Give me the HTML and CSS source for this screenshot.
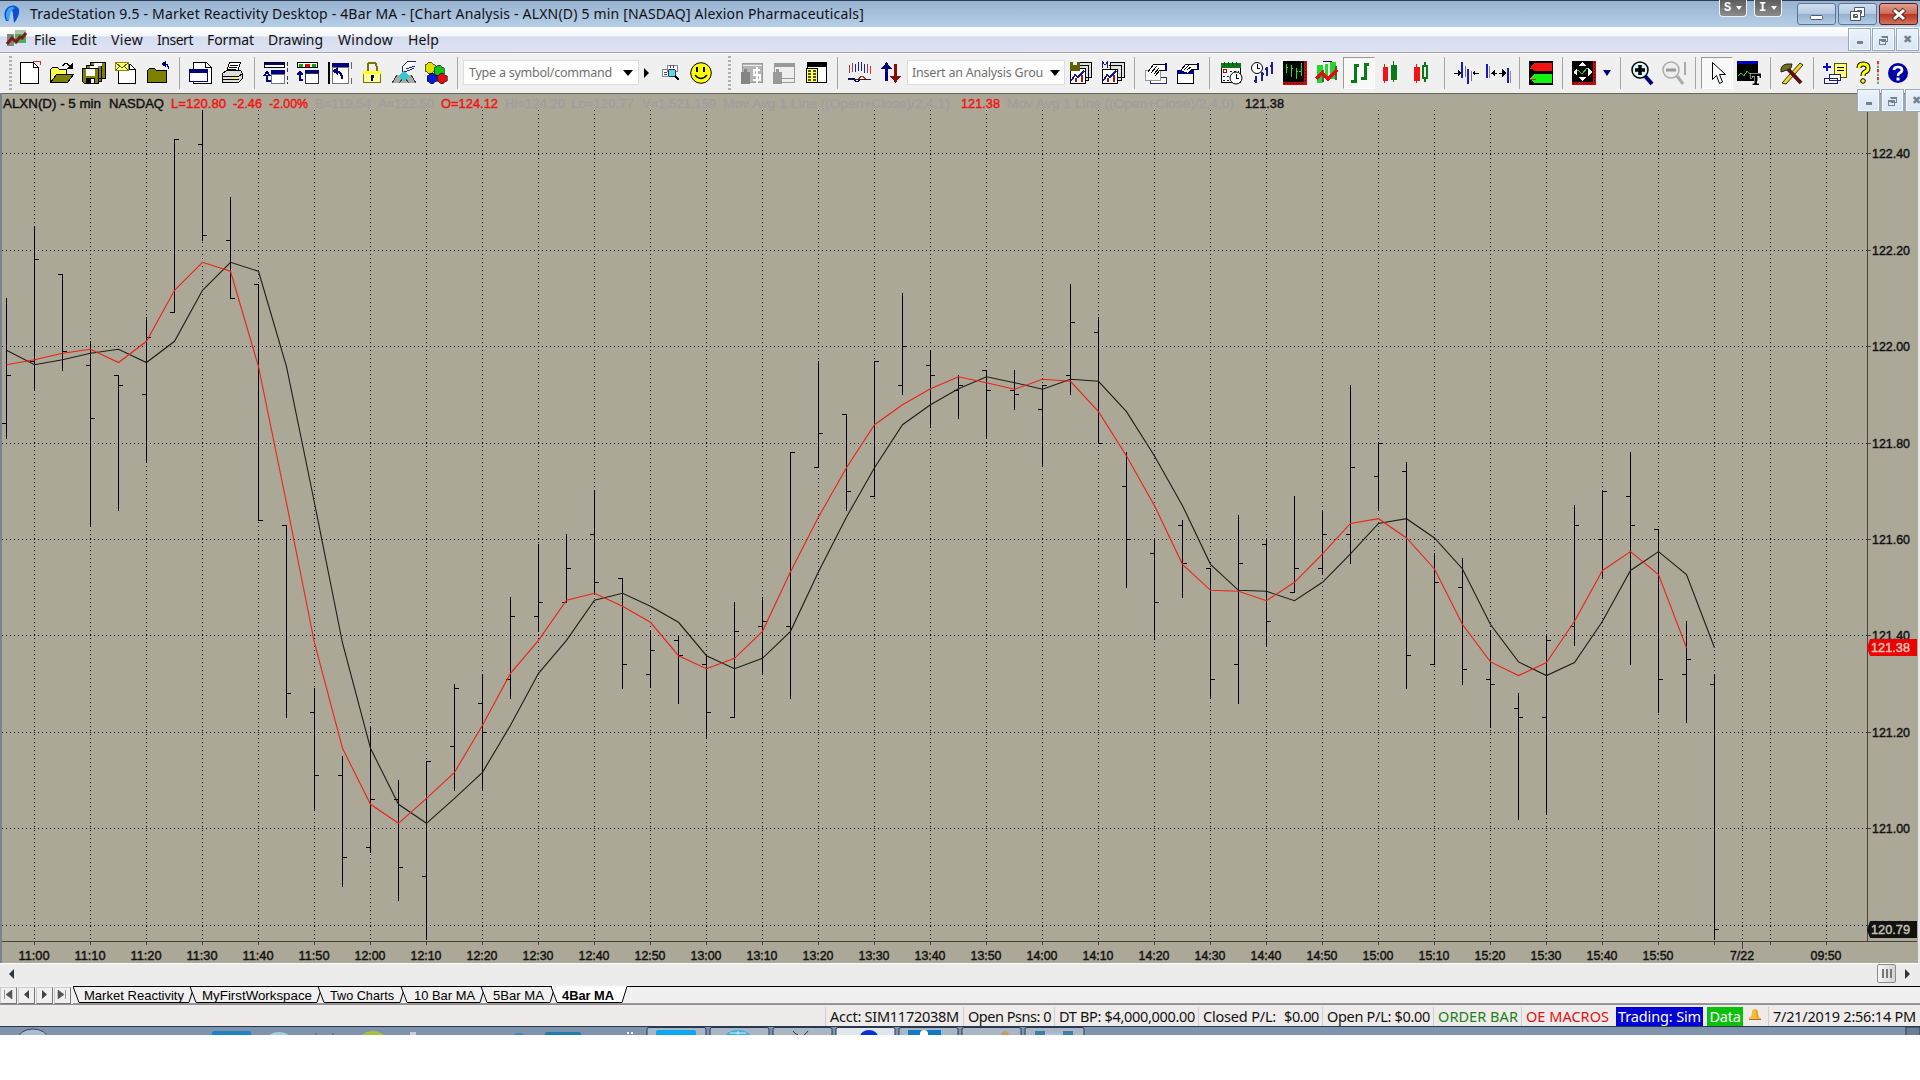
FILE: index.html
```html
<!DOCTYPE html>
<html lang="en">
<head>
  <meta charset="UTF-8">
  <title>TradeStation 9.5 - Market Reactivity Desktop</title>
  <link rel="stylesheet" href="styles.css">
</head>
<body>

  <header class="titlebar">
    <svg class="app-icon" width="20" height="22" viewBox="0 0 20 22"><path d="M4 18Q0 9 6 4Q13 0 17 6Q18 13 12 20L11 12Q11 7 9 7Q6 9 7 18Z" fill="#0b4fd0"/><path d="M5 17Q2 9 7 5Q10 3 13 5Q8 6 7 18Z" fill="#3ba4f5"/></svg>
    <span class="title" data-w="834">TradeStation 9.5 - Market Reactivity Desktop - 4Bar MA - [Chart Analysis - ALXN(D) 5 min [NASDAQ] Alexion Pharmaceuticals]</span>
    <div class="float-tags">
      <span class="float-tag">S<i></i></span>
      <span class="float-tag">I<i></i></span>
    </div>
    <div class="win-buttons">
      <span class="win-btn"><svg width="38" height="21"><rect x="12.5" y="11.500" width="12" height="4" rx="1" fill="#fff" stroke="#4c5a6e"/></svg></span>
      <span class="win-btn"><svg width="38" height="21"><g fill="#fff" stroke="#4c5a6e"><path d="M15.500 3.500h10v9h-10z M18.500 6.500h4v3h-4z" fill-rule="evenodd"/><path d="M11.500 7.500h10v9h-10z M14.500 10.500h4v3h-4z" fill-rule="evenodd"/></g></svg></span>
      <span class="win-btn close"><svg width="38" height="21"><path d="M13.500 5.500L24.500 15.500M24.500 5.500L13.500 15.500" stroke="#5b2a2a" stroke-width="5"/><path d="M14 6L24 15M24 6L14 15" stroke="#fff" stroke-width="3"/></svg></span>
    </div>
  </header>

  <nav class="menubar">
    <svg class="menu-icon" width="21" height="18" viewBox="0 0 21 18"><rect x="1" y="5" width="7" height="12" fill="#7a8c7c"/><rect x="9" y="1" width="11" height="13" fill="#4fae5c"/><rect x="9" y="1" width="11" height="4" fill="#a9c8ac"/><path d="M1 15L6 9L10 13L14 8L16 9L20 4" fill="none" stroke="#7c1b1b" stroke-width="3"/></svg>
    <span class="m1" data-w="22">File</span>
    <span class="m2" data-w="26">Edit</span>
    <span class="m3" data-w="32">View</span>
    <span class="m4" data-w="36">Insert</span>
    <span class="m5" data-w="47">Format</span>
    <span class="m6" data-w="55">Drawing</span>
    <span class="m7" data-w="55">Window</span>
    <span class="m8" data-w="31">Help</span>
    <div class="mdi-buttons">
      <span class="mdi-btn"><i class="g-min"></i></span>
      <span class="mdi-btn"><i class="g-restore"></i></span>
      <span class="mdi-btn"><i class="g-x">&#x2716;</i></span>
    </div>
  </nav>

  <div class="toolbar">
    <i class="grip first"></i>
    <span class="tool"><svg viewBox="0 0 24 24"><path d="M2.500 1.500h13l5 5v16h-18z" fill="#fff" stroke="#000"/><path d="M15.500 1.500v5h5" fill="none" stroke="#000"/><path d="M15 .5h7v3" fill="none" stroke="#c33"/></svg></span>
    <span class="tool"><svg viewBox="0 0 24 24"><path d="M.5 21.500v-13l2-2h5l2 2h7v5" fill="#ffff4a" stroke="#000"/><path d="M.5 21.500l6-8h17l-6 8z" fill="#808000" stroke="#000"/><path d="M12.500 5.500q3-6 8 0" fill="none" stroke="#000" stroke-width="1.500"/><path d="M22.500 2v6h-6z"/></svg></span>
    <span class="tool"><svg viewBox="0 0 24 24"><path d="M8.500 1.500h15v16h-15zM4.500 4.500h15v16h-15z" fill="#808000" stroke="#000"/><path d="M12 2h8v3h-8zM8 5h8v3h-8z" fill="#fff"/><path d="M.5 7.500h16v15h-14l-2-2z" fill="#808000" stroke="#000"/><path d="M4 8h9v7h-9z" fill="#fff"/><path d="M4 17h9v6h-9z"/><path d="M9 18h3v4h-3z" fill="#fff"/></svg></span>
    <span class="tool"><svg viewBox="0 0 24 24"><path d="M4.500 3.500h12l5 5v14h-17z" fill="#fff" stroke="#000"/><path d="M15.500 2.500v6h6" fill="none" stroke="#000"/><path d="M1.500 1.500h13v8h-13z" fill="#ffff7a" stroke="#8a8a00"/><path d="M2 2l6 5l6-5M2 9l4-4M14 9l-4-4" fill="none" stroke="#555500"/></svg></span>
    <span class="tool"><svg viewBox="0 0 24 24"><path d="M1.500 21.500v-12l2-2h5l2 2h10v12z" fill="#808000" stroke="#000"/><path d="M22.500 8q0-5-4-5" fill="none" stroke="#000080" stroke-width="1.500"/><path d="M15 3l5-3v6z" fill="#000080"/></svg></span>
    <i class="sep"></i>
    <span class="tool"><svg viewBox="0 0 24 24"><path d="M4.500 1.500h13l5 5v16h-18z" fill="#fff" stroke="#000"/><path d="M16.500 1.500v5h6" fill="none" stroke="#000"/><path d="M.5 8.500h18v12h-18z" fill="#fff" stroke="#000080"/><path d="M1 8h18v4h-18z" fill="#000080"/></svg></span>
    <span class="tool"><svg viewBox="0 0 24 24"><path d="M5.500 10.500l3-9h11l-3 9z" fill="#fff" stroke="#000"/><path d="M9 4h8M8 6h8M7 8h8" stroke="#000"/><path d="M1.500 12.500l4-3h14l2 3l-4 3h-16zM1.500 15.500h16l4-3v5l-4 4h-16z" fill="#ddd" stroke="#000"/><path d="M2 18h16" stroke="#000"/><path d="M11 16h5v2h-5z" fill="#ff0"/></svg></span>
    <i class="sep"></i>
    <span class="tool"><svg viewBox="0 0 24 24"><path d="M.5 1.500h20v5h-20z" fill="#fff" stroke="#000"/><path d="M1 2h19v2h-19z" fill="#000080"/><path d="M7 9h14v4h-14z" fill="#000080"/><path d="M7.500 13.500h13v9h-13z" fill="#fff" stroke="#777"/><path d="M7 20h-4v-6M0 15l3-4l3 4" stroke="#000080" stroke-width="2" fill="none"/><path d="M23 1v10M23 15v8" stroke="#335" stroke-dasharray="4 2"/></svg></span>
    <span class="tool"><svg viewBox="0 0 24 24"><path d="M1.500 1.500h20v5h-20z" fill="#fff" stroke="#000"/><path d="M3 3h4v3h-4zM16 3h4v3h-4z" fill="#0a0"/><path d="M9 3h5v3h-5z" fill="#d00"/><path d="M9 9h14v3h-14z" fill="#000080"/><path d="M9.500 12.500h13v10h-13z" fill="#fff" stroke="#333"/><path d="M7 19h-3v-6M1 14l3-3l3 3" stroke="#000080" stroke-width="2" fill="none"/></svg></span>
    <span class="tool"><svg viewBox="0 0 24 24"><path d="M1 1v22" stroke="#000" stroke-width="2"/><path d="M4 2h17v4h-17z" fill="#000080"/><path d="M4.500 6.500h16v16h-16z" fill="#fff" stroke="#777"/><path d="M14 18q0-8-7-8M10 7l-4 3l4 3" stroke="#000080" stroke-width="2" fill="none"/><path d="M23 1v7M23 17v6" stroke="#667"/></svg></span>
    <span class="tool"><svg viewBox="0 0 24 24"><path d="M7.500 12v-7q0-3 3-3h3q3 0 3 3v7" fill="none" stroke="#777700" stroke-width="2"/><path d="M3.500 11.500h17v10h-17z" fill="#ffff9b" stroke="#777700"/><path d="M3 10h18v3h-18z" fill="#ffff22"/><path d="M11 14h3v3h-1v3h-2z"/></svg></span>
    <span class="tool"><svg viewBox="0 0 24 24"><path d="M0 22l5-8h14l5 8z" fill="#aaa"/><path d="M0 22l5-8M24 22l-5-8M7 22l4-5M17 22l-4-5" stroke="#444"/><path d="M12 10l6 5l-6 5l-6-5z" fill="#35c9cc"/><path d="M10 11l1-6l5-5h8M14 8l9-3M12 11l6-2l4-2" stroke="#22228c" fill="#fff"/></svg></span>
    <span class="tool"><svg viewBox="0 0 24 24"><g stroke="#000" stroke-width=".6"><path d="M1 4l5-3l5 3v6l-5 3l-5-3z" fill="#dede00"/><path d="M10 7l5-3l5 3v6l-5 3l-5-3z" fill="#0fc411"/><path d="M3 15l5-3l5 3v5l-5 3l-5-3z" fill="#0919d6"/><path d="M13 15l5-3l5 3v5l-5 3l-5-3z" fill="#e01010"/></g></svg></span>
    <i class="sep"></i>
    <div class="combo symbol"><span data-w="143">Type a symbol/command</span><i class="drop"></i></div>
    <i class="go"></i>
    <span class="tool"><svg viewBox="0 0 24 24"><path d="M4.500 8.500h6v7h-6zM9.500 4.500h10v6h-10z" fill="#fff" stroke="#7d8793"/><path d="M12 4v3M15 4v3M6 11h3M6 13h3" stroke="#446"/><circle cx="14" cy="12" r="4" fill="#66d5dd" stroke="#236"/><path d="M17 15l4 4" stroke="#000" stroke-width="2"/></svg></span>
    <span class="tool face"><svg class="smooth" viewBox="0 0 24 24"><circle cx="12" cy="12" r="10.300" fill="#ffff00" stroke="#000"/><path d="M7 6h2v5h-2zM14 6h2v5h-2z"/><path d="M6 14q6 7 12 0" fill="none" stroke="#000" stroke-width="1.300"/></svg></span>
    <i class="grip second"></i>
    <span class="tool"><svg viewBox="0 0 24 24"><path d="M2.500 2.500h20v19h-20z" fill="#b4b4b4" stroke="#999"/><path d="M3 4h19v1h-19z" fill="#eee"/><path d="M1 11h9v12h-9zM4 8h3v3h-3z" fill="#858585"/><path d="M20 9h-6v5h6v5h-7M17 6v16" stroke="#fff" stroke-width="2" fill="none"/></svg></span>
    <span class="tool"><svg viewBox="0 0 24 24"><path d="M2.500 2.500h20v19h-20z" fill="#eee" stroke="#999"/><path d="M2 2h21v4h-21z" fill="#999"/><path d="M1 11h9v12h-9zM4 8h3v3h-3z" fill="#999"/><path d="M10 17h12" stroke="#999"/></svg></span>
    <span class="tool"><svg viewBox="0 0 24 24"><path d="M3.500 1.500h19v20h-19z" fill="#fff" stroke="#000"/><path d="M3 1h20v5h-20z"/><path d="M2.500 7.500h11v14h-11z" fill="#ff6" stroke="#000"/><path d="M4 10h3M9 10h3M4 13h3M9 13h3M4 16h3M9 16h3M4 19h3M9 19h3" stroke="#555500" stroke-width="1.500"/></svg></span>
    <i class="sep"></i>
    <span class="tool"><svg viewBox="0 0 24 24"><path d="M2 4v8M5 2v9M20 3v9" stroke="#b33"/><path d="M8 3v8M11 1v9M14 1v9M17 3v9" stroke="#1a22a8"/><path d="M23 5v8" stroke="#c33"/><path d="M1 18h6q3 5 6 0" stroke="#000080" stroke-width="1.500" fill="none"/><path d="M12 18q3-5 6 0" stroke="#c22" fill="none" stroke-width="1.500"/><path d="M1 18h23" stroke="#222"/></svg></span>
    <span class="tool"><svg viewBox="0 0 24 24"><path d="M6 20v-12h-4l5.500-7l5.500 7h-4v12z" fill="#00007b"/><path d="M15 3h3v12h4l-5.500 7l-5.500-7h4z" fill="#8b0a0a"/></svg></span>
    <div class="combo analysis"><span data-w="131">Insert an Analysis Grou</span><i class="drop"></i></div>
    <span class="tool"><svg viewBox="0 0 24 24"><path d="M8.500 1.500h14v15h-14zM4.500 4.500h15v15h-15z" fill="#ddd" stroke="#000"/><path d="M1.500 7.500h15v15h-15z" fill="#fff" stroke="#000"/><path d="M1 1h10v9h-10z" fill="#606000"/><path d="M4 1h4v3h-4z" fill="#fff"/><path d="M2 20l4-6l3 2l6-6" stroke="#15159c" fill="none" stroke-width="1.500"/><path d="M7 21v-4M13 14v7" stroke="#a11" stroke-width="2"/></svg></span>
    <span class="tool"><svg viewBox="0 0 24 24"><path d="M9.500 1.500h14v15h-14zM5.500 4.500h15v15h-15z" fill="#ddd" stroke="#000"/><path d="M1.500 8.500h15v14h-15z" fill="#fff" stroke="#000"/><path d="M0 0h8v8h-8z" fill="#f0f0f0"/><path d="M1.500 7v-6l2.500 3l2.500-3v6" stroke="#15159c" fill="none"/><path d="M2 20l4-6l3 2l6-6" stroke="#15159c" fill="none" stroke-width="1.500"/><path d="M7 21v-4M13 14v7" stroke="#a11" stroke-width="2"/></svg></span>
    <i class="sep"></i>
    <span class="tool"><svg viewBox="0 0 24 24"><path d="M6.500 16.500h16v6h-16z" fill="#fff" stroke="#2a2a88"/><path d="M1.500 9.500h15v10h-15z" fill="#fff" stroke="#999"/><path d="M4 11l6-8h5l7 1v5h-6l-5 6" fill="#fff" stroke="#000"/><path d="M7 12l6-7M10 13l5-6" stroke="#000"/><path d="M21 2h2v8h-2z" fill="#009"/></svg></span>
    <span class="tool"><svg viewBox="0 0 24 24"><path d="M1.500 9.500h16v13h-16z" fill="#fff" stroke="#000"/><path d="M1 9h17v4h-17z" fill="#000080"/><path d="M5 9l5-6h6l6 1v4h-6l-4 4" fill="#fff" stroke="#000"/><path d="M8 9l5-5M11 9l4-3" stroke="#000"/><path d="M21 2h2v7h-2z" fill="#000080"/></svg></span>
    <i class="sep"></i>
    <span class="tool"><svg viewBox="0 0 24 24"><path d="M2.500 3.500h19v18h-19z" fill="#fff" stroke="#000"/><path d="M2 2h20v5h-20z" fill="#087a18"/><path d="M5 1v4M9 1v4M13 1v4M17 1v4" stroke="#052"/><circle cx="6" cy="10" r="2" fill="none" stroke="#c00"/><path d="M11 10h9M4 15h8M4 19h6" stroke="#222" stroke-dasharray="2 2"/><circle class="smooth" cx="17" cy="17" r="6" fill="#fff" stroke="#000"/><path d="M17 13v4h3" stroke="#000" fill="none"/></svg></span>
    <span class="tool"><svg viewBox="0 0 24 24"><circle class="smooth" cx="6" cy="7" r="5.500" fill="#fff" stroke="#000"/><path d="M6 3v4h3" stroke="#000" fill="none"/><path d="M5 15v7M3 20h2M11 11v9M11 13h2M16 6v9M16 8h-2M21 1v12M19 5h2" stroke="#20208c" stroke-width="1.500"/></svg></span>
    <span class="tool"><svg viewBox="0 0 24 24"><path d="M0 0h24v24h-24z"/><path d="M21 0h3v24h-24v-3h21z" fill="#c50c0c"/><path d="M22 1v20M1 22h20" stroke="#300" stroke-dasharray="1 2"/><path d="M3 3v9M3 6h2M8 4v12M8 7h2M13 7v11M13 10h2M18 2v13M16 10h2" stroke="#17e51c"/></svg></span>
    <span class="tool"><svg viewBox="0 0 24 24"><path d="M8 .5h9" stroke="#009"/><path d="M2 4h6v18h-6zM10 3h3v15h-3zM15 1h6v17h-6z" fill="#24d62a"/><path d="M7 9h2v12h-2zM20 5h2v14h-2z" fill="#555"/><path d="M1 18l6-6l6 6l9-9" fill="none" stroke="#db1111" stroke-width="3"/></svg></span>
    <span class="tool pressed"><svg viewBox="0 0 24 24"><path d="M8 3v19M4 20.500h4M8 4.500h4M18 2v17M14 17.500h4M18 3.500h4" stroke="#087a18" stroke-width="3"/></svg></span>
    <span class="tool"><svg viewBox="0 0 24 24"><path d="M4 6h4v13h-4zM5.500 3v19" fill="#f01515" stroke="#f01515"/><path d="M12 4h5v14h-5zM14.500 0v21" fill="#087a18" stroke="#087a18"/></svg></span>
    <span class="tool"><svg viewBox="0 0 24 24"><path d="M3 6h5v13h-5zM5.500 3v19" fill="#f01515" stroke="#f01515"/><path d="M12 5h4v12h-4zM14 1v4M14 17v4" fill="none" stroke="#087a18" stroke-width="2"/></svg></span>
    <i class="sep"></i>
    <span class="tool"><svg viewBox="0 0 24 24"><path d="M8 1v16M14 8v15" stroke="#1717cc" stroke-width="2"/><path d="M11 5v11M17 10v10" stroke="#777"/><path d="M0 12h6M25 12h-6" stroke="#000"/><path d="M4 9l3 3l-3 3zM21 9l-3 3l3 3z"/></svg></span>
    <span class="tool"><svg viewBox="0 0 24 24"><path d="M1 3v14M22 7v15" stroke="#1717cc" stroke-width="2"/><path d="M3.500 5v12M24 10v12" stroke="#888"/><path d="M5 12h15" stroke="#000" stroke-dasharray="6 2"/><path d="M9 8l-4 4l4 4zM16 8l4 4l-4 4z"/></svg></span>
    <i class="sep"></i>
    <span class="tool"><svg viewBox="0 0 24 24"><path d="M0 0h24v24h-24z"/><path d="M1 17l4-4h18v9h-18l-4-4z" fill="#10f410"/><path d="M1 6l4-4h18v8h-18z" fill="#f21212"/><path d="M1 7h6M1 18h6" stroke="#f21212"/></svg></span>
    <i class="sep"></i>
    <span class="tool"><svg viewBox="0 0 24 24"><path d="M0 0h24v24h-24z"/><path d="M21 0h3v24h-24v-3h21z" fill="#c50c0c"/><path d="M22 1v20M1 22h20" stroke="#300" stroke-dasharray="1 2"/><path d="M2 13l4-4l4 4l5-6l4 4" stroke="#17e51c" fill="none"/><path d="M10 1l4 4h-8zM10 20l4-4h-8zM1 11l4-4v8zM20 11l-4-4v8z" fill="#fff"/></svg></span>
    <i class="blue-drop"></i>
    <i class="sep"></i>
    <span class="tool"><svg class="smooth" viewBox="0 0 24 24"><path d="M15 15l7 8" stroke="#00007b" stroke-width="4"/><circle cx="10" cy="9" r="8" fill="#d8f6f7" stroke="#000" stroke-width="1.500"/><path d="M5 9h10M10 4v10" stroke="#000" stroke-width="3.500"/></svg></span>
    <span class="tool"><svg class="smooth" viewBox="0 0 24 24"><path d="M15 15l6 8" stroke="#aaa" stroke-width="3"/><circle cx="9" cy="9" r="8" fill="#eee" stroke="#aaa" stroke-width="1.500"/><path d="M4 9h10" stroke="#999" stroke-width="3"/><path d="M23 1v13" stroke="#aaa" stroke-width="2"/></svg></span>
    <i class="sep"></i>
    <span class="tool pressed"><svg class="smooth" viewBox="0 0 24 24"><path d="M7.500 1.500v17l4-4l3 8l3-1.500l-3-7.500h6z" fill="#fff" stroke="#000"/></svg></span>
    <span class="tool"><svg viewBox="0 0 24 24"><path d="M0 0h21v20h-21z"/><path d="M0 0h21v3h-21z" fill="#0000c0"/><path d="M1 15l3-3l3 3l3-5l3 3" stroke="#10d41a" fill="none"/><path d="M13 12h11v5h-2v-2h-2v7h2v2h-7v-2h2v-7h-2v2h-2z" stroke="#fff" stroke-width=".5"/></svg></span>
    <i class="sep"></i>
    <span class="tool"><svg class="smooth" viewBox="0 0 24 24"><path d="M2 22l18-20l3 2l-17 19z" fill="#f5d72a" stroke="#000" stroke-width=".8"/><path d="M7 7l14 15" stroke="#5a1010" stroke-width="4"/><path d="M1 11q-1-7 6-8h5l-1 4l-4 2z" fill="#6f6d17" stroke="#222"/></svg></span>
    <i class="sep"></i>
    <span class="tool"><svg viewBox="0 0 24 24"><path d="M0 6h8M4 2v8" stroke="#0909d2" stroke-width="2.500"/><path d="M11.500 2.500h12v14h-12z" fill="#ffff7d" stroke="#555500"/><path d="M14 6h7M14 9h7" stroke="#000"/><path d="M6.500 13.500h11v6h-11zM1.500 17.500h13v5h-13z" fill="#fff" stroke="#1b1b91"/></svg></span>
    <span class="tool help"><svg class="smooth" viewBox="0 0 24 24"><path d="M8 7q0-4 4-4q5 0 5 4q0 3-3 4q-2 1-2 4" fill="none" stroke="#000" stroke-width="5"/><path d="M8 7q0-4 4-4q5 0 5 4q0 3-3 4q-2 1-2 4" fill="none" stroke="#ff0" stroke-width="3"/><circle cx="12" cy="20" r="2.300" fill="#ff0" stroke="#000"/></svg></span>
    <i class="color-dots"></i>
    <span class="tool"><svg class="smooth" viewBox="0 0 24 24"><circle cx="13" cy="12" r="10" fill="#0000a8"/><path d="M9 9q0-3 4-3q4 0 4 3q0 2-2.500 3q-1.500 1-1.500 3" fill="none" stroke="#fff" stroke-width="2.700"/><path d="M11.500 16.500h3v3h-3z" fill="#fff"/></svg></span>
  </div>

  <main class="chart-window">
    <svg id="chart" width="1920" height="870" viewBox="0 93 1920 870"></svg>
    <div class="child-buttons">
      <span class="mdi-btn"><i class="g-min"></i></span>
      <span class="mdi-btn"><i class="g-restore"></i></span>
      <span class="mdi-btn"><i class="g-x">&#x2716;</i></span>
    </div>
  </main>

  <div class="scrollbar">
    <i class="arrow-left"></i>
    <span class="thumb"><i></i><i></i><i></i></span>
    <i class="arrow-right"></i>
  </div>

  <div class="tabstrip">
    <div class="tab-nav">
      <span><svg width="10" height="9"><path d="M1.500 0v9M9 0v9L3 4.500z" stroke="#555" fill="#555" stroke-width=".6"/></svg></span>
      <span><svg width="10" height="9"><path d="M8 0v9L3 4.500z" fill="#444"/></svg></span>
      <span><svg width="10" height="9"><path d="M3 0v9L8 4.500z" fill="#444"/></svg></span>
      <span><svg width="10" height="9"><path d="M8.500 0v9M1 0v9L7 4.500z" stroke="#555" fill="#555" stroke-width=".6"/></svg></span>
    </div>
    <svg id="tabs" width="1847" height="19" viewBox="73 985 1847 19"></svg>
  </div>

  <footer class="statusbar">
    <span class="cell acct"><b data-w="129">Acct: SIM1172038M</b></span>
    <span class="cell psns"><b data-w="83">Open Psns: 0</b></span>
    <span class="cell bp"><b data-w="136">DT BP: $4,000,000.00</b></span>
    <span class="cell closed"><b data-w="73">Closed P/L:</b><b data-w="35">$0.00</b></span>
    <span class="cell open"><b data-w="103">Open P/L: $0.00</b></span>
    <span class="cell order"><b data-w="80">ORDER BAR</b></span>
    <span class="cell macros"><b data-w="83">OE MACROS</b></span>
    <span class="cell trading"><b data-w="83">Trading: Sim</b></span>
    <span class="data"><b data-w="31">Data</b></span>
    <svg class="bell" width="14" height="14" viewBox="0 0 14 14"><path d="M1 10q3-1 3-6q0-3 3-3t3 3q0 5 3 6v1h-12z" fill="#f4bd3a"/><path d="M8 2q2 4 1 8" stroke="#d98a2b" fill="none"/><path d="M1 11h12v1h-12z" fill="#a66c28"/></svg>
    <span class="cell clock"><b data-w="143">7/21/2019 2:56:14 PM</b></span>
  </footer>

  <div class="taskbar">
    <svg width="1920" height="9" viewBox="0 1026 1920 9">
      <ellipse cx="33" cy="1039" rx="15" ry="10" fill="#a9bccf" stroke="#33475e"/>
      <rect x="212" y="1031" width="39" height="6" rx="2" fill="#1b83c6"/>
      <ellipse cx="279" cy="1040" rx="12" ry="8" fill="#a9cbe3"/>
      <path d="M316 1033v3M333 1033v3" stroke="#4f6173"/>
      <ellipse cx="373" cy="1039" rx="12" ry="8" fill="#aac03c"/>
      <rect x="410" y="1032" width="6" height="4" fill="#c3ced9"/>
      <ellipse cx="519" cy="1039" rx="8" ry="6" fill="#3e83bd"/>
      <rect x="545" y="1032" width="36" height="6" rx="2" fill="#1d7fae"/>
      <path d="M627 1033h2M631 1033h2" stroke="#fff" stroke-width="2"/>
      <g id="tasks"></g>
      <rect x="656" y="1030" width="40" height="8" rx="2" fill="#10a5f0"/>
      <ellipse cx="738" cy="1038" rx="13" ry="8" fill="#3fb0dc"/><path d="M738 1031v5M730 1033h16" stroke="#d9f3ff"/>
      <path d="M793 1031q2 3 5 4M808 1031q-2 3-4 4" stroke="#333" fill="none"/>
      <ellipse cx="869" cy="1037" rx="9" ry="7" fill="#0b2fd8"/>
      <rect x="908" y="1030" width="33" height="8" fill="#1379c5"/><circle cx="924" cy="1034" r="4" fill="#fff"/>
      <ellipse cx="1005" cy="1036" rx="4" ry="5" fill="#c79c62"/>
      <path d="M1035 1031h10v5h-10zM1063 1031h10v5h-10z" fill="#3f7ea8"/><path d="M1045 1034h18" stroke="#b9c6d2"/>
      <rect x="1906" y="1027" width="14" height="9" fill="#6d7d92" stroke="#2c3a4c"/>
    </svg>
  </div>

  <script src="chart.js"></script>

</body>
</html>
```

FILE: styles.css
```css
body {
  margin: 0;
  width: 1920px;
  height: 1080px;
  overflow: hidden;
  background: #ffffff;
  font-family: "Noto Sans", "Open Sans", sans-serif;
  color: #111;
}

.titlebar {
  position: relative;
  display: flex;
  align-items: center;
  box-sizing: border-box;
  height: 27px;
  border-top: 1px solid #2f3a4c;
  background: linear-gradient(#98b3d2, #a6c0dc 50%, #b7cfe8);
}

.app-icon {
  margin-left: 2px;
}

.title {
  margin-left: 8px;
  padding-bottom: 2px;
  font-size: 14px;
  white-space: nowrap;
}

.float-tags {
  position: absolute;
  top: -1px;
  left: 1719px;
  display: flex;
  gap: 7px;
}

.float-tag {
  display: flex;
  align-items: center;
  justify-content: center;
  gap: 5px;
  box-sizing: border-box;
  width: 28px;
  height: 17px;
  border: 1px solid #f0f0f0;
  border-top: none;
  border-radius: 0 0 4px 4px;
  background: linear-gradient(#5c5c5c, #8c8c8c);
  color: #fff;
  font: bold 12px "Liberation Mono", monospace;
}

.float-tag i {
  border: 3px solid transparent;
  border-top: 4px solid #fff;
  border-bottom: none;
}

.win-buttons {
  display: flex;
  gap: 2px;
  margin-left: auto;
  margin-right: 2px;
}

.win-btn {
  box-sizing: border-box;
  width: 39px;
  height: 22px;
  border: 1px solid #5d7593;
  border-radius: 3px;
  background: linear-gradient(#cfdeee, #b5cae1 48%, #94afcd 50%, #b3cbe4);
  overflow: hidden;
}

.win-btn svg {
  display: block;
}

.win-btn.close {
  border-color: #5f1d22;
  background: linear-gradient(#dfa091, #cd6a55 48%, #b43220 50%, #d2745f);
}

.menubar {
  display: flex;
  align-items: center;
  box-sizing: border-box;
  height: 26px;
  padding: 0 0 0 6px;
  border-bottom: 1px solid #a2a6ae;
  background: linear-gradient(#ffffff, #f3f6fc 35%, #d6dcef 40%, #dfe3f4);
  font-size: 14px;
}

.menu-icon {
  margin-bottom: 3px;
}

.m1 { margin-left: 7px; }
.m2 { margin-left: 15px; }
.m3 { margin-left: 14px; }
.m4 { margin-left: 14px; }
.m5 { margin-left: 14px; }
.m6 { margin-left: 14px; }
.m7 { margin-left: 15px; }
.m8 { margin-left: 15px; }

.mdi-buttons {
  display: flex;
  gap: 1px;
  margin-left: auto;
  margin-right: 1px;
}

.mdi-btn {
  display: flex;
  align-items: center;
  justify-content: center;
  box-sizing: border-box;
  width: 23px;
  height: 23px;
  border: 1px solid #97a9bf;
  background: linear-gradient(#e9f3fd, #d9e6f5);
  box-shadow: inset 0 0 0 1px #f4f9fe;
}

.g-min {
  width: 6px;
  height: 3px;
  margin-top: 5px;
  background: #74828f;
}

.g-restore {
  position: relative;
  width: 5px;
  height: 3px;
  margin: 4px 3px 0 0;
  border: 1px solid #74828f;
  border-top-width: 2px;
}

.g-restore::before {
  content: "";
  position: absolute;
  top: -5px;
  left: 1px;
  width: 5px;
  height: 3px;
  border: 1px solid #74828f;
  border-top-width: 2px;
  border-left-color: transparent;
}

.g-x {
  color: #74828f;
  font: normal 11px/1 "DejaVu Sans", sans-serif;
}

.toolbar {
  display: flex;
  align-items: center;
  box-sizing: border-box;
  height: 40px;
  padding-bottom: 2px;
  border-top: 1px solid #fff;
  background: #f0f0f0;
}

.tool {
  display: flex;
  align-items: center;
  justify-content: center;
  flex: none;
  box-sizing: border-box;
  width: 32px;
  height: 32px;
}

.tool svg {
  width: 24px;
  height: 24px;
  shape-rendering: crispEdges;
  overflow: visible;
}

.tool svg.smooth,
.tool .smooth {
  shape-rendering: auto;
}

.tool.pressed {
  border: 1px solid #fff;
  border-top-color: #999;
  border-left-color: #999;
  background: #f8f8f8;
}

.tool.face {
  width: 30px;
}

.tool.help {
  width: 24px;
}

.sep {
  flex: none;
  width: 1px;
  height: 32px;
  margin: 0 5px;
  background: #a6a6a6;
}

.grip {
  flex: none;
  width: 3px;
  height: 34px;
  background: repeating-linear-gradient(#b0b0b0 0 2px, transparent 2px 4px);
}

.grip.first { margin: 0 2px 0 9px; }
.grip.second { margin: 0 5px 0 12px; }

.combo {
  display: flex;
  align-items: center;
  justify-content: space-between;
  flex: none;
  box-sizing: border-box;
  height: 25px;
  padding: 0 5px;
  border: 1px solid #ddd;
  background: #fff;
  color: #707070;
  white-space: nowrap;
}

.symbol {
  width: 176px;
  font-size: 12.5px;
}

.analysis {
  width: 158px;
  padding: 0 4px;
  font-size: 12.5px;
}

.drop {
  border: 5px solid transparent;
  border-top: 6px solid #000;
  border-bottom: none;
}

.go {
  flex: none;
  margin: 0 5px;
  border: 5px solid transparent;
  border-left: 5px solid #000;
  border-right: none;
}

.blue-drop {
  flex: none;
  margin: 0 4px 0 3px;
  border: 4px solid transparent;
  border-top: 6px solid #00007b;
  border-bottom: none;
}

.color-dots {
  flex: none;
  width: 2px;
  height: 24px;
  margin: 0 2px;
  background: repeating-linear-gradient(#d33 0 3px, #dcd27a 3px 5px, #3bb6b0 5px 7px, #eee 7px 8px);
}

.chart-window {
  position: relative;
  height: 870px;
  background: #aca897;
}

.chart-window svg {
  display: block;
}

.chart-window text {
  font-family: "Liberation Sans", Arial, sans-serif;
}

.child-buttons {
  position: absolute;
  top: -4px;
  left: 1857px;
  width: 63px;
  display: flex;
  gap: 1px;
  overflow: hidden;
}

.child-buttons .mdi-btn {
  flex: none;
}

.scrollbar {
  display: flex;
  align-items: center;
  box-sizing: border-box;
  height: 22px;
  padding: 0 10px 2px 9px;
  border-top: 1px solid #fff;
  background: #ececec;
}

.arrow-left {
  border: 5px solid transparent;
  border-right: 5px solid #333;
  border-left: none;
}

.arrow-right {
  margin-left: 9px;
  border: 5px solid transparent;
  border-left: 5px solid #333;
  border-right: none;
}

.thumb {
  display: flex;
  align-items: center;
  justify-content: center;
  gap: 2px;
  box-sizing: border-box;
  width: 19px;
  height: 19px;
  margin-left: auto;
  border: 1px solid #8c8c8c;
  border-radius: 2px;
  background: linear-gradient(90deg, #f6f6f6, #d4d4d4);
}

.thumb i {
  width: 2px;
  height: 9px;
  background: #777;
}

.tabstrip {
  display: flex;
  height: 19px;
  background: #f0f0f0;
}

.tab-nav {
  display: flex;
  gap: 1px;
  width: 73px;
  padding-top: 2px;
}

.tab-nav span {
  display: flex;
  align-items: center;
  justify-content: center;
  box-sizing: border-box;
  width: 17px;
  height: 17px;
  padding: 0 1px 2px 0;
  border: 1px solid #777;
  border-top-color: #ccc;
  border-left-color: #ccc;
}

.tabstrip text {
  font: 13.5px "Liberation Sans", Arial, sans-serif;
}

.tabstrip .active {
  font-weight: bold;
}

.statusbar {
  display: flex;
  align-items: center;
  justify-content: flex-end;
  box-sizing: border-box;
  height: 22px;
  padding: 1px 2px 0 0;
  border-top: 1px solid #8f8f8f;
  background: #efebea;
  font-size: 14.5px;
  white-space: nowrap;
}

.statusbar b {
  font-weight: normal;
}

.cell {
  display: flex;
  align-items: center;
  justify-content: space-between;
  flex: none;
  box-sizing: border-box;
  height: 19px;
  padding: 0 3px 0 4px;
  border-left: 1px solid #d2cecd;
}

.acct { width: 138px; }
.psns { width: 91px; }
.bp { width: 144px; }
.closed { width: 124px; }
.open { width: 111px; }
.order { width: 88px; color: #1a801a; }
.macros { width: 92px; color: #e01212; }

.trading {
  width: 87px;
  margin-left: 3px;
  padding: 0 2px;
  border: none;
  background: #0000d6;
  color: #fff;
}

.data {
  display: flex;
  align-items: center;
  justify-content: center;
  width: 36px;
  height: 19px;
  margin-left: 4px;
  background: #0ac00a;
  color: #fff;
}

.bell {
  margin: 0 6px 2px 5px;
}

.clock {
  width: 150px;
  padding-right: 2px;
}

.taskbar {
  height: 9px;
  background: #8093ac;
  box-shadow: inset 0 1px #27394f;
}

.taskbar svg {
  display: block;
}
```

FILE: chart.js
```js
// [high, open, close, low] in chart pixels, one bar every 28px
const bars = [
  [298, 423, 375, 439], [226, 361, 259, 390], [274, 274, 351, 371], [341, 365, 418, 527],
  [375, 375, 385, 511], [317, 394, 337, 462], [139, 312, 139, 313], [110, 144, 235, 241],
  [197, 240, 298, 299], [284, 284, 520, 521], [525, 525, 693, 718], [688, 712, 775, 811],
  [756, 775, 857, 887], [726, 847, 799, 853], [780, 799, 867, 901], [761, 876, 761, 940],
  [684, 746, 688, 791], [674, 703, 732, 790], [597, 679, 616, 699], [544, 616, 602, 632],
  [534, 602, 568, 603], [490, 534, 582, 593], [578, 578, 664, 689], [630, 674, 650, 688],
  [635, 640, 655, 704], [655, 664, 712, 739], [602, 717, 631, 718], [597, 626, 621, 674],
  [452, 626, 452, 699], [361, 467, 433, 468], [414, 414, 491, 511], [361, 496, 361, 497],
  [293, 385, 346, 395], [350, 365, 375, 428], [375, 390, 385, 419], [370, 370, 390, 439],
  [370, 390, 394, 410], [385, 409, 385, 467], [284, 375, 322, 395], [317, 332, 443, 444],
  [452, 486, 539, 588], [538, 553, 602, 640], [520, 525, 563, 598], [568, 568, 679, 699],
  [515, 664, 563, 704], [539, 544, 621, 647], [496, 592, 568, 593], [510, 568, 534, 575],
  [385, 534, 467, 564], [442, 476, 443, 511], [462, 471, 655, 689], [553, 664, 582, 665],
  [558, 587, 669, 685], [630, 679, 684, 728], [693, 708, 717, 820], [634, 717, 640, 814],
  [505, 626, 525, 646], [491, 539, 491, 578], [452, 496, 525, 665], [529, 529, 679, 713],
  [621, 674, 659, 723], [674, 684, 929, 940]
];

const average = [
  364.7, 359.7, 353.3, 349.3, 362.5, 341.3, 290.3, 262.3, 271.3, 366.7, 503, 643,
  748.3, 804.3, 823.3, 798.3, 772.3, 725.3, 673.3, 640.3, 600.3, 593.3, 606.3, 622.3,
  655.7, 668.7, 658.3, 631.3, 571.7, 517, 467.7, 424.7, 404.7, 388.7, 376.7, 382.7,
  389.3, 379.3, 381.3, 411.7, 456, 505.7, 564.3, 590.3, 591.3, 600.7, 582.3, 553.9,
  523.5, 518.7, 538, 569, 624.5, 661.9, 675.6, 662.6, 621.2, 570.5, 551.6, 574.6, 647.8
];

const barX = i => 6 + 28 * i;
const chart = document.getElementById("chart");
let out = "";

const label = (x, y, w, text, fill = "#111") =>
  `<text x="${x}" y="${y}" font-size="13.7" fill="${fill}" stroke="${fill}" stroke-width="0.45" textLength="${w}" lengthAdjust="spacingAndGlyphs">${text}</text>`;

// frame
out += `<rect x="0" y="93" width="1920" height="1" fill="#66675f"/>`;
out += `<rect x="0" y="93" width="2" height="870" fill="#7b838c"/>`;
out += `<rect x="1918" y="93" width="2" height="870" fill="#e8e8e6"/>`;

// price grid and scale
const prices = [["122.40", 153], ["122.20", 250], ["122.00", 346], ["121.80", 443], ["121.60", 539],
  ["121.40", 635], ["121.20", 732], ["121.00", 828], ["120.80", 925]];
prices.forEach(([text, y]) => {
  out += `<path d="M2 ${y + 0.5}H1867" stroke="#000" stroke-dasharray="1 3" shape-rendering="crispEdges"/>`;
  out += `<path d="M1867 ${y + 0.5}h4" stroke="#44443c"/>`;
  out += label(1872, y + 5, 38, text);
});

// time grid and scale
const lines = [];
for (let i = 0; i < 30; i++) {
  const min = 660 + i * 10;
  lines.push([34 + 56 * i, Math.floor(min / 60) + ":" + String(min % 60).padStart(2, "0")]);
}
lines.push([1714, ""], [1742, "7/22"], [1770, ""], [1826, "09:50"]);
lines.forEach(([x, text]) => {
  out += `<path d="M${x + 0.5} 110V941" stroke="#000" stroke-dasharray="1 3" shape-rendering="crispEdges"/>`;
  out += `<path d="M${x + 0.5} 941v${text === "7/22" ? 8 : 4}" stroke="#44443c"/>`;
  const w = text === "7/22" ? 24 : 31;
  if (text) out += label(x - w / 2, 960, w, text);
});
out += `<path d="M2 941.5H1917M1867.5 110V941" stroke="#44443c" fill="none"/>`;

// OHLC bars
bars.forEach(([high, open, close, low], i) => {
  const x = barX(i) + 0.5;
  out += `<path d="M${x} ${high}V${low}M${x - 4.5} ${open + 0.5}h4M${x} ${close + 0.5}h4.500" stroke="#000"/>`;
});

// moving averages, the second one displaced by one bar
const points = (values, shift) => values.map((y, i) => `${barX(i + shift) + 0.5},${y}`).join(" ");
out += `<polyline points="6.5,350.3 ${points(average, 1)}" fill="none" stroke="#1d1d18" stroke-width="1.1"/>`;
out += `<polyline points="${points(average, 0)}" fill="none" stroke="#ee2018" stroke-width="1.1"/>`;

// price markers
[[639, "121.38", "#ee0000", "#dcc8bc"], [921, "120.79", "#111111", "#c4c1b2"]].forEach(([y, text, bg, fg]) => {
  out += `<path d="M1867 ${y + 9}L1870 ${y}H1917V${y + 17}H1870Z" fill="${bg}"/>`;
  out += label(1871, y + 13, 39, text, fg);
});

// status line
const red = "#f01414", dim = "#a19f9d";
[
  [3, 98, "ALXN(D) - 5 min"], [109, 55, "NASDAQ"], [171, 55, "L=120.80", red], [233, 29, "-2.46", red],
  [269, 39, "-2.00%", red], [315, 56, "B=119.54", dim], [378, 56, "A=122.50", dim], [441, 57, "O=124.12", red],
  [505, 60, "Hi=124.20", dim], [571, 63, "Lo=120.77", dim], [642, 74, "V=1,521,159", dim],
  [723, 227, "Mov Avg 1 Line ((Open+Close)/2,4,1)", dim], [961, 39, "121.38", red],
  [1007, 227, "Mov Avg 1 Line ((Open+Close)/2,4,0)", dim], [1245, 39, "121.38"]
].forEach(([x, w, text, fill]) => { out += label(x, 108, w, text, fill); });

chart.innerHTML = out;

// workspace tabs
const tabs = [
  ["Market Reactivity", 74, 191, 84, 100], ["MyFirstWorkspace", 191, 319, 202, 110],
  ["Two Charts", 319, 402, 330, 64], ["10 Bar MA", 402, 482, 414, 61],
  ["5Bar MA", 482, 552, 493, 51], ["4Bar MA", 552, 624, 562, 52]
];
let strip = `<path d="M73 1003.5H1920" stroke="#999"/>`;
tabs.forEach(([text, x1, x2, tx, tw], i) => {
  const active = i === tabs.length - 1;
  strip += `<path d="M${x1 - 1} 986.5L${x1 + 5} 1002.500H${x2 - 2}L${x2 + 3} 986.500" fill="${active ? "#fff" : "#f0f0f0"}" stroke="#000"/>`;
  strip += `<text class="${active ? "active" : ""}" x="${tx}" y="1000" textLength="${tw}" lengthAdjust="spacingAndGlyphs">${text}</text>`;
});
strip += `<path d="M73 986.5H552M627 986.5H1920" stroke="#000"/>`;
document.getElementById("tabs").innerHTML = strip;

// task buttons
document.getElementById("tasks").innerHTML = [647, 710, 773, 836, 899, 962, 1025].map(x =>
  `<rect x="${x}" y="1027.500" width="59" height="12" rx="2" fill="${x === 836 ? "#dfe6ee" : "#a9b6c6"}" stroke="#26384e"/>`).join("");

// spread each fixed-width caption over its width
document.querySelectorAll("[data-w]").forEach(el => {
  const width = el.getBoundingClientRect().width;
  el.style.letterSpacing = (el.dataset.w - width) / el.textContent.length + "px";
});
```
